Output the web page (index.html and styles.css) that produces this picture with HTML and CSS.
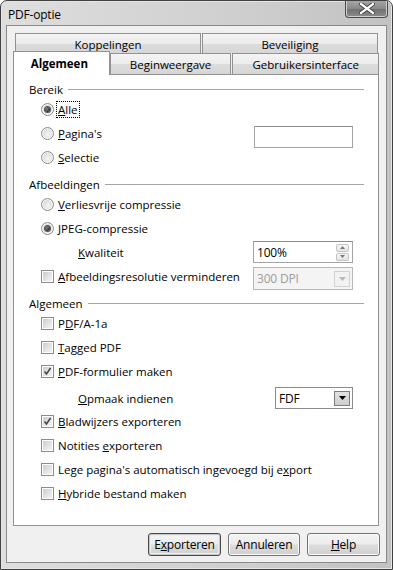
FILE: index.html
```html
<!DOCTYPE html>
<html>

<head>
    <meta charset="utf-8">
    <title>PDF-optie</title>
    <link rel="stylesheet" href="styles.css">
</head>

<body>
    <div class="window">
        <div class="titlebar">
            <span class="title">PDF-optie</span>
            <span class="close">
                <svg width="16" height="11" viewBox="0 0 16 11">
                    <path d="M2 1 L14 10 M14 1 L2 10" stroke="#3a3a3a" stroke-width="4" stroke-linecap="square"/>
                    <path d="M2 1 L14 10 M14 1 L2 10" stroke="#fff" stroke-width="2.2" stroke-linecap="square"/>
                </svg>
            </span>
        </div>
        <div class="client">
            <div class="tabs">
                <div class="tabrow back">
                    <div class="tab kop">Koppelingen</div>
                    <div class="tab bev">Beveiliging</div>
                </div>
                <div class="tabrow front">
                    <div class="tab active alg">Algemeen</div>
                    <div class="tab beg">Beginweergave</div>
                    <div class="tab geb">Gebruikersinterface</div>
                </div>
            </div>
            <div class="panel">
                <!-- Bereik -->
                <div class="group-head"><span>Bereik</span><i></i></div>
                <div class="row"><span class="radio on"></span><span class="focus"><u>A</u>lle</span></div>
                <div class="row"><span class="radio"></span><span><u>P</u>agina's</span>
                    <span class="field pages"></span>
                </div>
                <div class="row"><span class="radio"></span><span><u>S</u>electie</span></div>

                <!-- Afbeeldingen -->
                <div class="group-head"><span>Afbeeldingen</span><i></i></div>
                <div class="row"><span class="radio"></span><span><u>V</u>erliesvrije compressie</span></div>
                <div class="row"><span class="radio on"></span><span><u>J</u>PEG-compressie</span></div>
                <div class="row sub"><span><u>K</u>waliteit</span>
                    <span class="field spin"><span>100%</span>
                        <span class="spinbtns">
                            <b><svg width="5" height="3" viewBox="0 0 5 3"><path d="M0 3 L2.5 0 L5 3Z" fill="#777"/></svg></b>
                            <b><svg width="5" height="3" viewBox="0 0 5 3"><path d="M0 0 L2.5 3 L5 0Z" fill="#777"/></svg></b>
                        </span>
                    </span>
                </div>
                <div class="row"><span class="check"></span><span><u>A</u>fbeeldingsresolutie verminderen</span>
                    <span class="field combo disabled"><span>300 DPI</span>
                        <b><svg width="7" height="4" viewBox="0 0 7 4"><path d="M0 0 L3.5 4 L7 0Z" fill="#b8b8b8"/></svg></b>
                    </span>
                </div>

                <!-- Algemeen -->
                <div class="group-head"><span>Algemeen</span><i></i></div>
                <div class="row"><span class="check"></span><span>P<u>D</u>F/A-1a</span></div>
                <div class="row"><span class="check"></span><span><u>T</u>agged PDF</span></div>
                <div class="row"><span class="check on"><svg width="11" height="11" viewBox="0 0 11 11"><path d="M2.5 5.5 L4.5 8 L8.5 2" stroke="#444" stroke-width="1.5" fill="none"/></svg></span><span><u>P</u>DF-formulier maken</span></div>
                <div class="row sub opmaak"><span><u>O</u>pmaak indienen</span>
                    <span class="field combo fdf"><span>FDF</span>
                        <b><svg width="7" height="4" viewBox="0 0 7 4"><path d="M0 0 L3.5 4 L7 0Z" fill="#000"/></svg></b>
                    </span>
                </div>
                <div class="row"><span class="check on"><svg width="11" height="11" viewBox="0 0 11 11"><path d="M2.5 5.5 L4.5 8 L8.5 2" stroke="#444" stroke-width="1.5" fill="none"/></svg></span><span><u>B</u>ladwijzers exporteren</span></div>
                <div class="row"><span class="check"></span><span>Notities <u>e</u>xporteren</span></div>
                <div class="row"><span class="check"></span><span>Lege pagina's automatisch ingevoegd bij e<u>x</u>port</span></div>
                <div class="row"><span class="check"></span><span><u>H</u>ybride bestand maken</span></div>
            </div>
            <div class="buttons">
                <button class="default">E<u>x</u>porteren</button>
                <button>Annuleren</button>
                <button class="help"><u>H</u>elp</button>
            </div>
        </div>
    </div>
</body>

</html>
```

FILE: styles.css
```css
body {
    margin: 0;
    background: #fff;
    font-family: "Open Sans", "Noto Sans", sans-serif;
    font-size: 11.5px;
    color: #000;
}

.window {
    width: 393px;
    height: 570px;
    box-sizing: border-box;
    border: 1px solid #404040;
    border-radius: 7px 7px 0 0;
    background: linear-gradient(90deg, #dedede 0, #cfcfcf 60%, #c2c2c2 100%);
    box-shadow: inset 0 0 0 1px #e6e6e6;
    display: flex;
    flex-direction: column;
    overflow: hidden;
}

/* title bar */
.titlebar {
    height: 24px;
    display: flex;
    align-items: center;
    justify-content: space-between;
    flex-shrink: 0;
}

.title {
    margin-left: 7px;
    margin-top: 2px;
    font-size: 12px;
    letter-spacing: -0.2px;
}

.close {
    align-self: flex-start;
    margin-right: 4px;
    margin-top: -1px;
    width: 43px;
    height: 18px;
    box-sizing: border-box;
    border: 1px solid #4a4a4a;
    border-top: 0;
    border-radius: 0 0 4px 4px;
    background: linear-gradient(#a8a8a8 0, #8a8a8a 50%, #6e6e6e 51%, #8c8c8c 100%);
    box-shadow: inset 0 0 0 1px #cfcfcf;
    display: flex;
    align-items: center;
    justify-content: center;
}

/* client area */
.client {
    flex: 1;
    margin: 0 5px 6px 5px;
    border: 1px solid #8a8a8a;
    background: #f0f0f0;
    padding: 7px 7px 0 6px;
    display: flex;
    flex-direction: column;
}

/* tabs */
.tabrow {
    display: flex;
}

.tabrow.back {
    height: 20px;
    padding-left: 2px;
    gap: 1px;
}

.tabrow.front {
    height: 21px;
    align-items: flex-end;
}

.tab {
    box-sizing: border-box;
    border: 1px solid #929292;
    border-bottom: 0;
    background: linear-gradient(#f4f4f4 0, #ececec 50%, #dcdcdc 51%, #d6d6d6 100%);
    display: flex;
    align-items: center;
    justify-content: center;
    height: 100%;
    padding-top: 1px;
}

.tab.kop { width: 186px; }
.tab.bev { width: 176px; }
.tab.alg { width: 97px; }
.tab.beg { width: 122px; margin-left: 0; }
.tab.geb { width: 147px; margin-left: 1px; }

.front .tab {
    height: 21px;
}

.tab.active {
    position: relative;
    z-index: 1;
    height: 24px;
    margin-bottom: -1px;
    background: #fff;
    font-weight: bold;
    padding-top: 0;
    padding-right: 4px;
}

/* panel */
.panel {
    height: 452px;
    box-sizing: border-box;
    border: 1px solid #929292;
    background: #fff;
    padding: 6px 14px 0 15px;
}

.group-head {
    height: 16px;
    display: flex;
    align-items: center;
}

.group-head i {
    flex: 1;
    height: 1px;
    background: #a6a6a6;
    margin-left: 5px;
    margin-top: 1px;
}

.row + .group-head {
    margin-top: 7px;
}

.row {
    height: 24px;
    display: flex;
    align-items: center;
    padding-left: 12px;
    padding-right: 11px;
    white-space: nowrap;
}

.row.sub {
    padding-left: 49px;
}

.row.opmaak {
    height: 26px;
    padding-top: 4px;
    box-sizing: border-box;
}

.focus {
    outline: 1px dotted #000;
    outline-offset: 0;
    padding: 0 1px;
    margin-left: -1px;
    line-height: 15px;
}

/* radio buttons */
.radio {
    width: 13px;
    height: 13px;
    box-sizing: border-box;
    border-radius: 50%;
    border: 1px solid #8c8c8c;
    background: radial-gradient(circle at 55% 60%, #f6f6f6 0, #dedede 55%, #c8c8c8 100%);
    box-shadow: inset 0 0 0 1px #fafafa;
    margin-right: 4px;
    display: flex;
    align-items: center;
    justify-content: center;
    flex-shrink: 0;
}

.radio.on::after {
    content: "";
    width: 5px;
    height: 5px;
    border-radius: 50%;
    background: radial-gradient(circle at 40% 40%, #8a8a8a 0, #262626 70%);
    box-shadow: 0 0 0 1px #555;
}

/* check boxes */
.check {
    width: 13px;
    height: 13px;
    box-sizing: border-box;
    border: 1px solid #8c8c8c;
    background: linear-gradient(135deg, #c8c8c8 0, #e6e6e6 60%, #f6f6f6 100%);
    box-shadow: inset 0 0 0 1px #fff;
    margin-right: 4px;
    display: flex;
    align-items: center;
    justify-content: center;
    flex-shrink: 0;
}

/* fields */
.field {
    margin-left: auto;
    box-sizing: border-box;
    height: 22px;
    width: 99px;
    border: 1px solid #a4a4a4;
    border-top-color: #8e8e8e;
    background: #fff;
    display: flex;
    align-items: center;
    padding-left: 3px;
    font-size: 12px;
    letter-spacing: -0.2px;
}

.field.pages {
    margin-top: 8px;
}

.field.spin {
    height: 22px;
    width: 100px;
    justify-content: space-between;
    padding-right: 3px;
}

.spinbtns {
    display: flex;
    flex-direction: column;
    gap: 1px;
}

.spinbtns b {
    width: 13px;
    height: 8px;
    box-sizing: border-box;
    border: 1px solid #c4c4c4;
    border-radius: 2px;
    background: linear-gradient(#f8f8f8, #e4e4e4);
    display: flex;
    align-items: center;
    justify-content: center;
}

.combo {
    justify-content: space-between;
    padding-right: 2px;
}

.combo b {
    width: 16px;
    height: 16px;
    box-sizing: border-box;
    display: flex;
    align-items: center;
    justify-content: center;
}

.combo.disabled {
    width: 100px;
    height: 23px;
    margin-top: 5px;
    border-color: #b8b8b8;
    background: #f4f4f4;
    color: #9c9c9c;
}

.combo.disabled b {
    border: 1px solid #d2d2d2;
    background: #f2f2f2;
}

.combo.fdf {
    width: 78px;
    height: 22px;
    border-color: #8c8c8c;
}

.combo.fdf b {
    border: 1px solid #7c7c7c;
    background: linear-gradient(#e2e2e2, #cdcdcd);
    height: 15px;
}

/* buttons */
.buttons {
    display: flex;
    justify-content: flex-end;
    gap: 7px;
    margin-top: 7px;
    margin-right: -1px;
}

.buttons button {
    font-family: inherit;
    font-size: 12px;
    letter-spacing: -0.2px;
    color: #000;
    width: 72px;
    height: 23px;
    padding: 0;
    border: 1px solid #727272;
    border-radius: 3px;
    background: linear-gradient(#f4f4f4 0, #ececec 48%, #dddddd 52%, #cfcfcf 100%);
    box-shadow: inset 0 0 0 1px #fbfbfb;
}

.buttons .default {
    width: 73px;
    border-color: #4a4a4a;
    box-shadow: inset 0 0 0 1px #c6c6c6, inset 0 0 0 2px #eeeeee;
}

.buttons .help {
    width: 73px;
}
```
